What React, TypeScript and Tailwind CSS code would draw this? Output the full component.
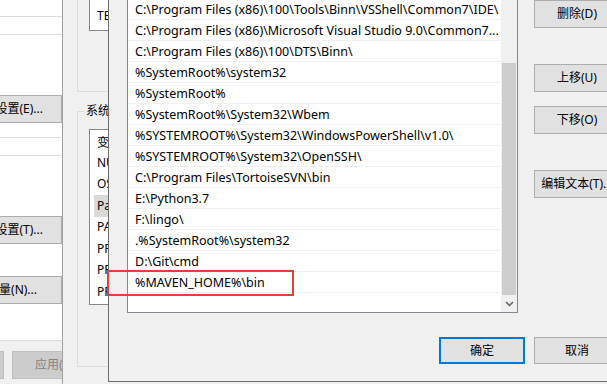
const pathRows = [
  "C:\\Program Files (x86)\\100\\Tools\\Binn\\VSShell\\Common7\\IDE\\",
  "C:\\Program Files (x86)\\Microsoft Visual Studio 9.0\\Common7...",
  "C:\\Program Files (x86)\\100\\DTS\\Binn\\",
  "%SystemRoot%\\system32",
  "%SystemRoot%",
  "%SystemRoot%\\System32\\Wbem",
  "%SYSTEMROOT%\\System32\\WindowsPowerShell\\v1.0\\",
  "%SYSTEMROOT%\\System32\\OpenSSH\\",
  "C:\\Program Files\\TortoiseSVN\\bin",
  "E:\\Python3.7",
  "F:\\lingo\\",
  ".%SystemRoot%\\system32",
  "D:\\Git\\cmd",
  "%MAVEN_HOME%\\bin",
]

const sysVars = [
  "NUMBER_OF_PROCESSORS",
  "OS",
  "Path",
  "PATHEXT",
  "PROCESSOR_ARCHITECTURE",
  "PROCESSOR_IDENTIFIER",
  "PROCESSOR_LEVEL",
]

function LeftButton({ label, pr }: { label: string; pr: string }) {
  return (
    <div
      className={`-ml-[20px] flex h-[28px] w-[82px] items-center justify-end whitespace-nowrap border border-[#adadad] bg-[#e1e1e1] ${pr}`}
    >
      {label}
    </div>
  )
}

function Btn({ label, className = "" }: { label: string; className?: string }) {
  return (
    <div
      className={`flex h-[28px] w-[86px] shrink-0 items-center justify-center whitespace-nowrap border border-[#adadad] bg-[#e1e1e1] ${className}`}
    >
      {label}
    </div>
  )
}

export default function App() {
  return (
    <div className="relative flex h-[384px] w-[607px] overflow-hidden bg-[#f0f0f0] font-['Noto_Sans','Noto_Sans_CJK_SC',sans-serif] text-[12px] leading-none text-black">
      {/* System Properties window (behind) */}
      <div className="flex w-[62px] shrink-0 flex-col overflow-hidden">
        <div className="flex h-[341px] flex-col border-b border-[#dcdcdc] bg-white">
          <div className="h-[16px]" />
          <div className="h-[18px] border-t border-[#dcdcdc]" />
          <div className="h-[104px] border-y border-[#dcdcdc] pt-[60px]">
            <LeftButton label="设置(E)..." pr="pr-[18px]" />
          </div>
          <div className="h-[17px]" />
          <div className="border-t border-[#dcdcdc] pt-[60px]">
            <LeftButton label="设置(T)..." pr="pr-[18px]" />
          </div>
          <div className="mt-[32px]">
            <LeftButton label="环境变量(N)..." pr="pr-[24px]" />
          </div>
        </div>
        <div className="mt-[10px] flex">
          <div className="h-[28px] w-[4px] shrink-0 border-y border-r border-[#bfbfbf] bg-[#cccccc]" />
          <div className="ml-[8px] flex h-[28px] w-[80px] shrink-0 items-center whitespace-nowrap border border-[#bfbfbf] bg-[#cccccc] pl-[22px] text-[#838383]">
            应用(A)
          </div>
        </div>
      </div>

      {/* Environment Variables window */}
      <div className="w-[46px] shrink-0 overflow-hidden border-l border-[#a0a0a0]">
        <div className="w-[200px] pl-[14px]">
          <div className="-mt-[20px] h-[112px] border-b border-l border-[#dcdcdc] pl-[11px]">
            <div className="flex h-[51px] flex-col justify-end border-b border-l border-[#828790] bg-white pb-[4px]">
              <div className="flex h-[21px] items-center whitespace-nowrap pl-[7px]">OneDrive</div>
              <div className="flex h-[21px] items-center whitespace-nowrap pl-[7px]">TEMP</div>
            </div>
          </div>
          <div className="relative mt-[19px] h-[256px] border-y border-l border-[#dcdcdc] pl-[11px] pt-[17px]">
            <span className="absolute -top-[7px] left-[6px] whitespace-nowrap bg-[#f0f0f0] px-[2px]">系统变量(S)</span>
            <div className="h-[176px] overflow-hidden border-y border-l border-[#828790] bg-white">
              <div className="flex h-[22px] items-center whitespace-nowrap pl-[7px] pt-[3px]">变量</div>
              {sysVars.map((v) => (
                <div key={v} className="h-[21.5px] pl-[4px]">
                  <div
                    className={`flex h-full items-center whitespace-nowrap pl-[3px] ${v === "Path" ? "bg-[#d9d9d9]" : ""}`}
                  >
                    {v}
                  </div>
                </div>
              ))}
            </div>
          </div>
        </div>
      </div>

      {/* Edit environment variable dialog */}
      <div className="flex h-[382px] min-w-0 flex-1 flex-col overflow-hidden border-b border-l border-[#6d6d6d] pl-[18px]">
        <div className="flex">
          <div className="-mt-[2px] flex h-[315px] w-[391px] shrink-0 border border-[#828790] bg-white">
            <div className="min-w-0 flex-1 overflow-hidden text-[12.5px]">
              {pathRows.map((r) => (
                <div
                  key={r}
                  className="flex h-[21px] items-center whitespace-nowrap border-b border-[#efefef] pl-[7px] pt-[2px]"
                >
                  {r}
                </div>
              ))}
            </div>
            <div className="flex w-[16px] shrink-0 flex-col bg-[#f0f0f0]">
              <div className="h-[64px]" />
              <div className="mx-[1px] h-[232px] bg-[#cdcdcd]" />
              <div className="flex flex-1 items-center justify-center">
                <svg width="9" height="6" viewBox="0 0 9 6">
                  <path d="M1 1l3.5 3.5L8 1" stroke="#606060" strokeWidth="1.5" fill="none" />
                </svg>
              </div>
            </div>
          </div>
          <div className="ml-[16px] flex shrink-0 flex-col">
            <Btn label="删除(D)" />
            <Btn label="上移(U)" className="mt-[36px]" />
            <Btn label="下移(O)" className="mt-[14px]" />
            <Btn label="编辑文本(T)..." className="mt-[36px]" />
          </div>
        </div>
        <div className="mt-[24px] flex gap-[9px] pl-[312px]">
          <div className="flex h-[27px] w-[86px] shrink-0 items-center justify-center border-2 border-[#0078d7] bg-[#e1e1e1]">
            确定
          </div>
          <div className="flex h-[27px] w-[86px] shrink-0 items-center justify-center border border-[#adadad] bg-[#e1e1e1]">
            取消
          </div>
        </div>
      </div>

      {/* red highlight annotation */}
      <div className="absolute left-[107px] top-[270px] h-[26px] w-[187px] border-2 border-[#f03a3a]" />
    </div>
  )
}
